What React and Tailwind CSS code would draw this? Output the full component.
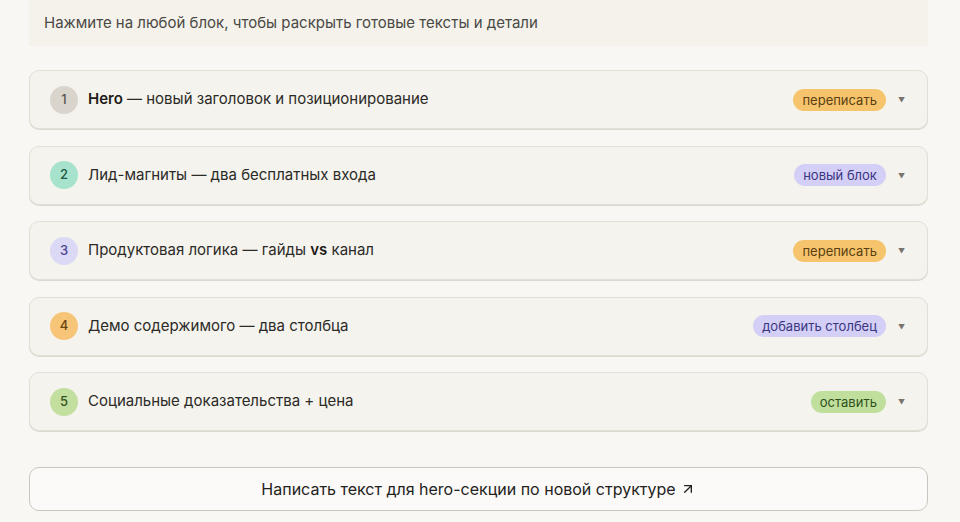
import { ArrowUpRight } from 'lucide-react';

const items = [
  {
    n: 1,
    title: (
      <>
        <span className="font-semibold text-[#1c1b19]">Hero</span> — новый заголовок и позиционирование
      </>
    ),
    dot: 'bg-[#d9d5cd] text-[#5a5750]',
    tag: 'переписать',
    tagCls: 'bg-[#f6c46c] text-[#5b3f12]',
  },
  {
    n: 2,
    title: 'Лид-магниты — два бесплатных входа',
    dot: 'bg-[#a6e2cc] text-[#1f5a46]',
    tag: 'новый блок',
    tagCls: 'bg-[#d3cff7] text-[#3b3680]',
  },
  {
    n: 3,
    title: (
      <>
        Продуктовая логика — гайды <span className="font-semibold text-[#1c1b19]">vs</span> канал
      </>
    ),
    dot: 'bg-[#dcd9f6] text-[#4a4590]',
    tag: 'переписать',
    tagCls: 'bg-[#f6c46c] text-[#5b3f12]',
  },
  {
    n: 4,
    title: 'Демо содержимого — два столбца',
    dot: 'bg-[#f6c578] text-[#6a4510]',
    tag: 'добавить столбец',
    tagCls: 'bg-[#d3cff7] text-[#3b3680]',
  },
  {
    n: 5,
    title: 'Социальные доказательства + цена',
    dot: 'bg-[#c3dfa0] text-[#35531f]',
    tag: 'оставить',
    tagCls: 'bg-[#c0de9c] text-[#2f5120]',
  },
];

export default function App() {
  return (
    <div
      className="min-h-[522px] bg-[#f8f7f3] pl-[29px] pr-[32px] pb-3"
      style={{ fontFamily: 'Inter, "Noto Sans", sans-serif' }}
    >
      <div className="flex h-[46px] items-center bg-[#f4f2eb] px-[15px]">
        <p className="text-[15px] text-[#4a4844]">
          Нажмите на любой блок, чтобы раскрыть готовые тексты и детали
        </p>
      </div>

      <div className="mt-[24px] flex flex-col gap-[16.5px]">
        {items.map((it) => (
          <button
            key={it.n}
            type="button"
            className="flex h-[59px] w-full items-center rounded-[10px] border border-[#e2dfd7] bg-[#f5f3ed] pl-[20px] pr-[22px] text-left shadow-[0_1px_0_#dcd9d1]"
          >
            <span
              className={`flex h-[28px] w-[28px] shrink-0 items-center justify-center rounded-full text-[13px] font-medium ${it.dot}`}
            >
              {it.n}
            </span>
            <span className="ml-[10px] flex-1 text-[15px] text-[#2b2a27]">{it.title}</span>
            <span className={`rounded-full px-[9px] py-[3px] text-[13px] leading-[16px] ${it.tagCls}`}>
              {it.tag}
            </span>
            <span className="ml-[12px] mt-[2px] text-[7px] leading-none text-[#77746d]">▼</span>
          </button>
        ))}
      </div>

      <button
        type="button"
        className="mt-[36px] flex h-[44px] w-full items-center justify-center gap-1 rounded-[10px] border border-[#c9c6bf] bg-[#fbfaf8] text-[16px] text-[#232220]"
      >
        Написать текст для hero-секции по новой структуре
        <ArrowUpRight size={16} strokeWidth={2} />
      </button>
    </div>
  );
}
